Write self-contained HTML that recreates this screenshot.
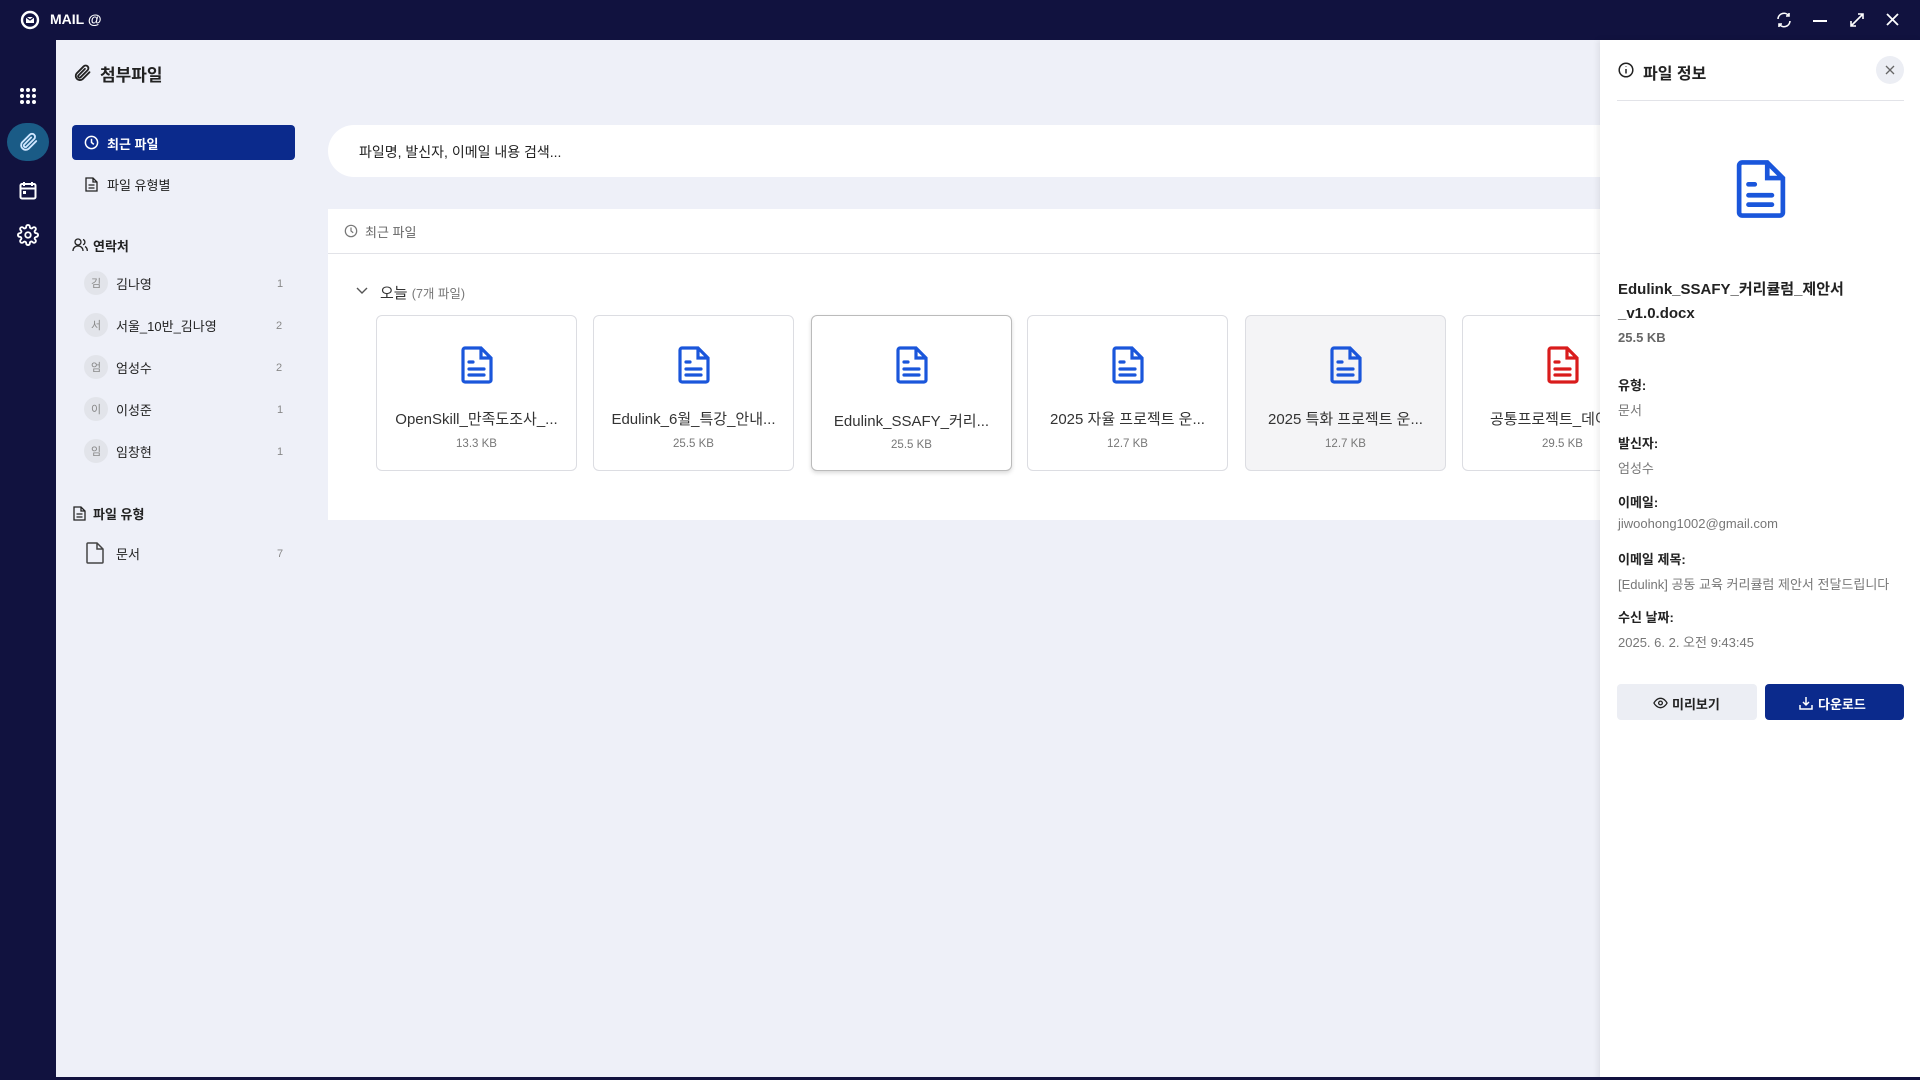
<!DOCTYPE html>
<html><head><meta charset="utf-8"><style>
*{box-sizing:border-box;margin:0;padding:0}
body{width:1920px;height:1080px;overflow:hidden;background:#eef0f8;font-family:"Liberation Sans","Noto Sans CJK KR",sans-serif;color:#222;position:relative}
.top{position:absolute;left:0;top:0;width:1920px;height:40px;background:#11123f;color:#fff}
.rail{position:absolute;left:0;top:40px;width:56px;height:1040px;background:#11123f}
.abs{position:absolute}
.side{position:absolute;left:56px;top:40px;width:272px;height:1040px;background:#eef0f8}
.t{position:absolute;white-space:nowrap}
.av{position:absolute;left:84px;width:24px;height:24px;border-radius:12px;background:#e2e4ea;color:#888;font-size:11px;text-align:center;line-height:26px}
.card{position:absolute;top:315px;width:201px;height:156px;background:#fff;border:1px solid #dcdde2;border-radius:6px}
.card .nm{position:absolute;top:92px;left:0;width:100%;text-align:center;font-size:15px;color:#333}
.card .sz{position:absolute;top:122px;left:0;width:100%;text-align:center;font-size:11.5px;color:#777}
.card svg{position:absolute;left:84px;top:30px}
.lbl{position:absolute;left:1618px;font-size:13px;font-weight:bold;color:#222}
.val{position:absolute;left:1618px;font-size:13px;color:#777;white-space:nowrap}
.cnt{position:absolute;font-size:11px;color:#888}
</style></head><body>
<div class="top">
 <svg class="abs" style="left:20px;top:10px" width="20" height="20" viewBox="0 0 20 20"><circle cx="10" cy="10" r="8" fill="none" stroke="#fff" stroke-width="2.4"/><rect x="6" y="7" width="8" height="6" fill="#fff"/><path d="M6 7l4 3 4-3" stroke="#11123f" stroke-width="1.2" fill="none"/></svg>
 <div class="t" style="left:50px;top:11px;font-size:14px;font-weight:bold">MAIL @</div>
 <svg class="abs" style="left:1775px;top:11px" width="18" height="18" viewBox="0 0 18 18" fill="none" stroke="#fff" stroke-width="1.6"><path d="M3 8a6 6 0 0 1 11-3M15 10a6 6 0 0 1-11 3"/><path d="M14 2v3h-3M4 16v-3h3"/></svg>
 <div class="abs" style="left:1813px;top:20px;width:14px;height:2px;background:#fff"></div>
 <svg class="abs" style="left:1849px;top:12px" width="16" height="16" viewBox="0 0 16 16" fill="none" stroke="#fff" stroke-width="1.6"><path d="M2 14L14 2M9 2h5v5M2 9v5h5"/></svg>
 <svg class="abs" style="left:1885px;top:12px" width="15" height="15" viewBox="0 0 15 15" stroke="#fff" stroke-width="1.8"><path d="M2 2l11 11M13 2L2 13"/></svg>
</div>
<div class="rail">
 <svg class="abs" style="left:19px;top:47px" width="18" height="18" viewBox="0 0 18 18" fill="#fff"><circle cx="3" cy="3" r="2"/><circle cx="9" cy="3" r="2"/><circle cx="15" cy="3" r="2"/><circle cx="3" cy="9" r="2"/><circle cx="9" cy="9" r="2"/><circle cx="15" cy="9" r="2"/><circle cx="3" cy="15" r="2"/><circle cx="9" cy="15" r="2"/><circle cx="15" cy="15" r="2"/></svg>
 <div class="abs" style="left:7px;top:83px;width:42px;height:38px;border-radius:21px;background:#1a5b86"></div>
 <svg class="abs" style="left:17px;top:91px" width="22" height="22" viewBox="0 0 24 24" fill="none" stroke="#cfe6ff" stroke-width="2" stroke-linecap="round"><path d="M21 11l-8.5 8.5a5 5 0 0 1-7-7L14 4a3.3 3.3 0 0 1 4.7 4.7l-8.5 8.5a1.7 1.7 0 0 1-2.4-2.4L15.5 7"/></svg>
 <svg class="abs" style="left:19px;top:141px" width="18" height="19" viewBox="0 0 18 19" fill="none" stroke="#fff" stroke-width="2"><rect x="1.5" y="3" width="15" height="14.5" rx="1.5"/><path d="M5 1v4M13 1v4M1.5 7.5h15"/><rect x="4" y="10" width="3" height="3" fill="#fff" stroke="none"/></svg>
 <svg class="abs" style="left:17px;top:184px" width="22" height="22" viewBox="0 0 24 24" fill="none" stroke="#fff" stroke-width="2"><circle cx="12" cy="12" r="3"/><path d="M19.4 15a1.7 1.7 0 0 0 .3 1.8l.1.1a2 2 0 1 1-2.8 2.8l-.1-.1a1.7 1.7 0 0 0-2.9 1.2V21a2 2 0 1 1-4 0v-.1a1.7 1.7 0 0 0-2.9-1.2l-.1.1a2 2 0 1 1-2.8-2.8l.1-.1A1.7 1.7 0 0 0 3 14H3a2 2 0 1 1 0-4h.1a1.7 1.7 0 0 0 1.2-2.9l-.1-.1a2 2 0 1 1 2.8-2.8l.1.1A1.7 1.7 0 0 0 10 3V3a2 2 0 1 1 4 0v.1a1.7 1.7 0 0 0 2.9 1.2l.1-.1a2 2 0 1 1 2.8 2.8l-.1.1A1.7 1.7 0 0 0 21 10h0a2 2 0 1 1 0 4z"/></svg>
</div>
<div class="side"></div>
<svg class="abs" style="left:72px;top:63px" width="20" height="20" viewBox="0 0 24 24" fill="none" stroke="#222" stroke-width="2.2" stroke-linecap="round"><path d="M21 11l-8.5 8.5a5 5 0 0 1-7-7L14 4a3.3 3.3 0 0 1 4.7 4.7l-8.5 8.5a1.7 1.7 0 0 1-2.4-2.4L15.5 7"/></svg>
<div class="t" style="left:100px;top:61px;font-size:17px;font-weight:bold">첨부파일</div>
<div class="abs" style="left:72px;top:125px;width:223px;height:35px;border-radius:4px;background:#0b2a8c"></div>
<svg class="abs" style="left:84px;top:135px" width="15" height="15" viewBox="0 0 16 16" fill="none" stroke="#fff" stroke-width="1.6"><circle cx="8" cy="8" r="6.5"/><path d="M8 4v4l2.5 2"/></svg>
<div class="t" style="left:107px;top:134px;font-size:13px;font-weight:bold;color:#fff">최근 파일</div>
<svg class="abs" style="left:85px;top:177px" width="13" height="15" viewBox="0 0 13 15" fill="none" stroke="#222" stroke-width="1.3"><path d="M1 1h7l4 4v9H1z M8 1v4h4M3.5 8h6M3.5 11h6"/></svg>
<div class="t" style="left:107px;top:175px;font-size:13px">파일 유형별</div>
<svg class="abs" style="left:72px;top:238px" width="16" height="14" viewBox="0 0 16 14" fill="none" stroke="#222" stroke-width="1.3"><circle cx="6" cy="4" r="3"/><path d="M1 13c0-3 2-5 5-5s5 2 5 5M11 1.5a2.8 2.8 0 0 1 0 5.3M13 8.5c1.5.8 2.3 2.4 2.3 4.5"/></svg>
<div class="t" style="left:93px;top:236px;font-size:13px;font-weight:bold">연락처</div>
<div class="av" style="top:271px">김</div><div class="t" style="left:116px;top:274px;font-size:13px">김나영</div><div class="cnt" style="left:277px;top:278px">1</div>
<div class="av" style="top:313px">서</div><div class="t" style="left:116px;top:316px;font-size:13px">서울_10반_김나영</div><div class="cnt" style="left:276px;top:320px">2</div>
<div class="av" style="top:355px">엄</div><div class="t" style="left:116px;top:358px;font-size:13px">엄성수</div><div class="cnt" style="left:276px;top:362px">2</div>
<div class="av" style="top:397px">이</div><div class="t" style="left:116px;top:400px;font-size:13px">이성준</div><div class="cnt" style="left:277px;top:404px">1</div>
<div class="av" style="top:439px">임</div><div class="t" style="left:116px;top:442px;font-size:13px">임창현</div><div class="cnt" style="left:277px;top:446px">1</div>
<svg class="abs" style="left:73px;top:506px" width="13" height="15" viewBox="0 0 13 15" fill="none" stroke="#222" stroke-width="1.3"><path d="M1 1h7l4 4v9H1z M8 1v4h4M3.5 8h6M3.5 11h6"/></svg>
<div class="t" style="left:93px;top:504px;font-size:13px;font-weight:bold">파일 유형</div>
<svg class="abs" style="left:86px;top:542px" width="18" height="22" viewBox="0 0 18 22" fill="none" stroke="#444" stroke-width="1.5"><path d="M2 1h9l6 6v13a1 1 0 0 1-1 1H2a1 1 0 0 1-1-1V2a1 1 0 0 1 1-1zM11 1v6h6"/></svg>
<div class="t" style="left:116px;top:544px;font-size:13px">문서</div><div class="cnt" style="left:277px;top:548px">7</div>

<div class="abs" style="left:328px;top:125px;width:1300px;height:52px;background:#fff;border-radius:26px 0 0 26px"></div>
<div class="t" style="left:359px;top:142px;font-size:14px;color:#222">파일명, 발신자, 이메일 내용 검색...</div>
<div class="abs" style="left:328px;top:209px;width:1280px;height:311px;background:#fff"></div>
<div class="abs" style="left:328px;top:253px;width:1280px;height:1px;background:#e2e3e8"></div>
<svg class="abs" style="left:344px;top:224px" width="14" height="14" viewBox="0 0 16 16" fill="none" stroke="#777" stroke-width="1.4"><circle cx="8" cy="8" r="6.5"/><path d="M8 4v4l2.5 2"/></svg>
<div class="t" style="left:365px;top:222px;font-size:13px;color:#666">최근 파일</div>
<svg class="abs" style="left:356px;top:287px" width="12" height="8" viewBox="0 0 12 8" fill="none" stroke="#555" stroke-width="1.4"><path d="M1 1l5 5 5-5"/></svg>
<div class="t" style="left:380px;top:282px;font-size:15px;color:#333">오늘 <span style="font-size:12.5px;color:#777">(7개 파일)</span></div>

<div class="card" style="left:376px"><svg width="32" height="38" viewBox="0 0 32 38" fill="none" stroke="#1a56db" stroke-width="3.2"><path d="M4 2h16l10 10v22a2 2 0 0 1-2 2H4a2 2 0 0 1-2-2V4a2 2 0 0 1 2-2zM20 2v10h10"/><path d="M8 16h4M8 23h15M8 29h15" stroke-linecap="round"/></svg><div class="nm">OpenSkill_만족도조사_...</div><div class="sz">13.3 KB</div></div>
<div class="card" style="left:593px"><svg width="32" height="38" viewBox="0 0 32 38" fill="none" stroke="#1a56db" stroke-width="3.2"><path d="M4 2h16l10 10v22a2 2 0 0 1-2 2H4a2 2 0 0 1-2-2V4a2 2 0 0 1 2-2zM20 2v10h10"/><path d="M8 16h4M8 23h15M8 29h15" stroke-linecap="round"/></svg><div class="nm">Edulink_6월_특강_안내...</div><div class="sz">25.5 KB</div></div>
<div class="card" style="left:811px;border-color:#bbb;box-shadow:0 2px 4px rgba(0,0,0,.15)"><svg width="32" height="38" viewBox="0 0 32 38" fill="none" stroke="#1a56db" stroke-width="3.2"><path d="M4 2h16l10 10v22a2 2 0 0 1-2 2H4a2 2 0 0 1-2-2V4a2 2 0 0 1 2-2zM20 2v10h10"/><path d="M8 16h4M8 23h15M8 29h15" stroke-linecap="round"/></svg><div class="nm" style="top:94px">Edulink_SSAFY_커리...</div><div class="sz" style="top:123px">25.5 KB</div></div>
<div class="card" style="left:1027px"><svg width="32" height="38" viewBox="0 0 32 38" fill="none" stroke="#1a56db" stroke-width="3.2"><path d="M4 2h16l10 10v22a2 2 0 0 1-2 2H4a2 2 0 0 1-2-2V4a2 2 0 0 1 2-2zM20 2v10h10"/><path d="M8 16h4M8 23h15M8 29h15" stroke-linecap="round"/></svg><div class="nm">2025 자율 프로젝트 운...</div><div class="sz">12.7 KB</div></div>
<div class="card" style="left:1245px;background:#f4f4f6"><svg width="32" height="38" viewBox="0 0 32 38" fill="none" stroke="#1a56db" stroke-width="3.2"><path d="M4 2h16l10 10v22a2 2 0 0 1-2 2H4a2 2 0 0 1-2-2V4a2 2 0 0 1 2-2zM20 2v10h10"/><path d="M8 16h4M8 23h15M8 29h15" stroke-linecap="round"/></svg><div class="nm">2025 특화 프로젝트 운...</div><div class="sz">12.7 KB</div></div>
<div class="card" style="left:1462px"><svg width="32" height="38" viewBox="0 0 32 38" fill="none" stroke="#d91c1c" stroke-width="3.2"><path d="M4 2h16l10 10v22a2 2 0 0 1-2 2H4a2 2 0 0 1-2-2V4a2 2 0 0 1 2-2zM20 2v10h10"/><path d="M8 16h4M8 23h15M8 29h15" stroke-linecap="round"/></svg><div class="nm">공통프로젝트_데이터...</div><div class="sz">29.5 KB</div></div>

<div class="abs" style="left:1600px;top:40px;width:320px;height:1040px;background:#fff;box-shadow:-2px 0 6px rgba(0,0,0,.08)"></div>
<svg class="abs" style="left:1618px;top:62px" width="16" height="16" viewBox="0 0 16 16" fill="none" stroke="#222" stroke-width="1.5"><circle cx="8" cy="8" r="6.8"/><path d="M8 7v4.5M8 4.5v.5"/></svg>
<div class="t" style="left:1643px;top:60px;font-size:16px;font-weight:bold">파일 정보</div>
<div class="abs" style="left:1876px;top:56px;width:28px;height:28px;border-radius:14px;background:#eceef4"></div>
<svg class="abs" style="left:1885px;top:65px" width="10" height="10" viewBox="0 0 10 10" stroke="#666" stroke-width="1.3"><path d="M1 1l8 8M9 1l-8 8"/></svg>
<div class="abs" style="left:1617px;top:100px;width:287px;height:1px;background:#e2e3e8"></div>
<svg class="abs" style="left:1736px;top:158px" width="50" height="62" viewBox="0 0 32 38" fill="none" stroke="#1a56db" stroke-width="3"><path d="M4 2h16l10 10v22a2 2 0 0 1-2 2H4a2 2 0 0 1-2-2V4a2 2 0 0 1 2-2zM20 2v10h10"/><path d="M8 16h4M8 23h15M8 29h15" stroke-linecap="round"/></svg>
<div class="t" style="left:1618px;top:278px;font-size:15px;font-weight:bold;line-height:24px">Edulink_SSAFY_커리큘럼_제안서<br>_v1.0.docx</div>
<div class="t" style="left:1618px;top:330px;font-size:13px;font-weight:bold;color:#666">25.5 KB</div>
<div class="lbl" style="top:375px">유형:</div><div class="val" style="top:400px">문서</div>
<div class="lbl" style="top:433px">발신자:</div><div class="val" style="top:458px">엄성수</div>
<div class="lbl" style="top:492px">이메일:</div><div class="val" style="top:516px">jiwoohong1002@gmail.com</div>
<div class="lbl" style="top:549px">이메일 제목:</div><div class="val" style="top:574px">[Edulink] 공동 교육 커리큘럼 제안서 전달드립니다</div>
<div class="lbl" style="top:607px">수신 날짜:</div><div class="val" style="top:632px">2025. 6. 2. 오전 9:43:45</div>
<div class="abs" style="left:1617px;top:684px;width:140px;height:36px;border-radius:4px;background:#eceef4"></div>
<svg class="abs" style="left:1653px;top:697px" width="15" height="12" viewBox="0 0 16 12" fill="none" stroke="#222" stroke-width="1.4"><path d="M1 6s2.5-5 7-5 7 5 7 5-2.5 5-7 5-7-5-7-5z"/><circle cx="8" cy="6" r="2"/></svg>
<div class="t" style="left:1672px;top:694px;font-size:13px;font-weight:bold;color:#222">미리보기</div>
<div class="abs" style="left:1765px;top:684px;width:139px;height:36px;border-radius:4px;background:#0b2a8c"></div>
<svg class="abs" style="left:1799px;top:696px" width="14" height="14" viewBox="0 0 14 14" fill="none" stroke="#fff" stroke-width="1.5"><path d="M7 1v8M4 6l3 3 3-3M1 9v4h12V9"/></svg>
<div class="t" style="left:1818px;top:694px;font-size:13px;font-weight:bold;color:#fff">다운로드</div>
<div class="abs" style="left:0;top:1077px;width:1920px;height:3px;background:#11123f"></div>
</body></html>
